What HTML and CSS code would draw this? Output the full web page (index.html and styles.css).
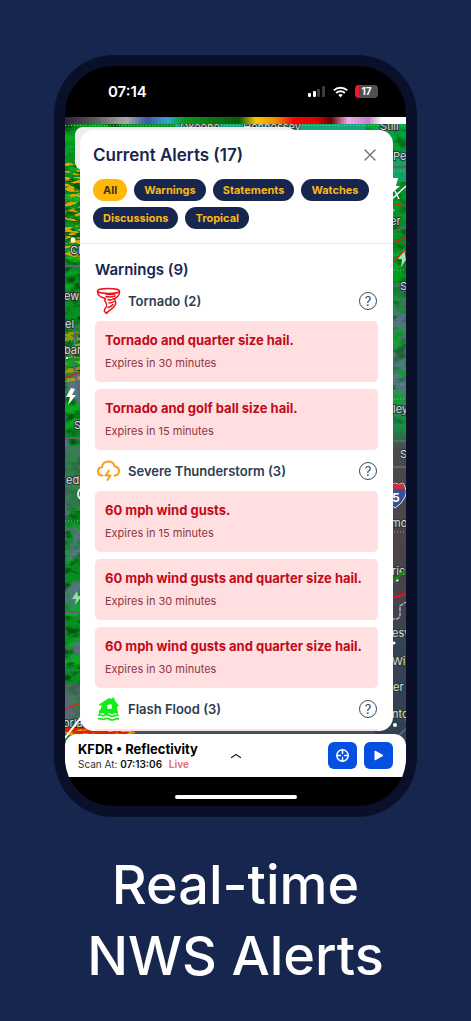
FILE: index.html
```html
<!DOCTYPE html>
<html lang="en">
<head>
    <meta charset="UTF-8">
    <meta name="viewport" content="width=device-width, initial-scale=1.0">
    <title>Real-time NWS Alerts</title>
    <link rel="stylesheet" href="styles.css">
</head>
<body>
    <section class="phone">
        <div class="screen">
            <div class="status-bar">
                <span class="clock">07:14</span>
                <div class="status-icons">
                    <svg width="18" height="12" viewBox="0 0 18 12" fill="#fff">
                        <rect x="0" y="7" width="3" height="4" rx="1"/>
                        <rect x="5" y="5" width="3" height="6" rx="1"/>
                        <rect x="9" y="3" width="3" height="8" rx="1" fill="#3d3d3d"/>
                        <rect x="14" y="0" width="3" height="11" rx="1" fill="#3d3d3d"/>
                    </svg>
                    <svg width="15" height="12" viewBox="0 0 15 12" fill="none" stroke="#fff" stroke-width="2">
                        <path d="M.8 4.4a9.6 9.6 0 0 1 13.4 0"/>
                        <path d="M3.2 7a6.2 6.2 0 0 1 8.6 0"/>
                        <path d="M7.500 11.200 5.300 9a3.200 3.200 0 0 1 4.400 0z" fill="#fff" stroke="none"/>
                    </svg>
                    <span class="battery">17</span>
                </div>
            </div>
            <div class="color-scale"></div>

            <main class="viewport">
                <svg class="map" viewBox="0 0 341 653" preserveAspectRatio="none" aria-hidden="true">
                    <defs>
                        <filter id="dark" x="0" y="0" width="100%" height="100%" color-interpolation-filters="sRGB">
                            <feTurbulence type="fractalNoise" baseFrequency="0.07 0.12" numOctaves="3" seed="4"/>
                            <feColorMatrix values="0 0 0 0 0  0 0 0 0 .32  0 0 0 0 .04  4 0 0 0 -1.8"/>
                        </filter>
                        <filter id="lime" x="0" y="0" width="100%" height="100%" color-interpolation-filters="sRGB">
                            <feTurbulence type="fractalNoise" baseFrequency="0.05 0.09" numOctaves="4" seed="9"/>
                            <feColorMatrix values="0 0 0 0 .02  0 0 0 0 .68  0 0 0 0 .12  6 0 0 0 -3"/>
                        </filter>
                        <filter id="blue" x="0" y="0" width="100%" height="100%" color-interpolation-filters="sRGB">
                            <feTurbulence type="fractalNoise" baseFrequency="0.04 0.03" numOctaves="4" seed="21"/>
                            <feColorMatrix values="0 0 0 0 .33  0 0 0 0 .46  0 0 0 0 .5  7 0 0 0 -3.500"/>
                        </filter>
                        <filter id="gold" x="0" y="0" width="100%" height="100%" color-interpolation-filters="sRGB">
                            <feTurbulence type="fractalNoise" baseFrequency="0.08 0.3" numOctaves="3" seed="7"/>
                            <feColorMatrix values="0 0 0 0 .85  0 0 0 0 .66  0 0 0 0 0  10 0 0 0 -5"/>
                        </filter>
                        <linearGradient id="east" x1="0" y1="0" x2="0" y2="1">
                            <stop offset="0" stop-color="#00a83c"/>
                            <stop offset=".24" stop-color="#087f22"/>
                            <stop offset=".3" stop-color="#547485"/>
                            <stop offset=".4" stop-color="#4f7a7c"/>
                            <stop offset=".46" stop-color="#168f49"/>
                            <stop offset=".5" stop-color="#4d484b"/>
                            <stop offset=".72" stop-color="#4b4149"/>
                            <stop offset=".8" stop-color="#344454"/>
                            <stop offset="1" stop-color="#2f3f54"/>
                        </linearGradient>
                    </defs>
                    <rect width="341" height="653" fill="#078e20"/>
                    <rect width="60" height="653" filter="url(#dark)"/>
                    <rect width="60" height="653" filter="url(#lime)"/>
                    <rect y="235" width="60" height="418" filter="url(#blue)"/>
                    <rect y="35" width="40" height="100" filter="url(#gold)"/>
                    <rect y="208" width="40" height="50" filter="url(#gold)" opacity=".7"/>
                    <path d="M0 322h30v70l-30-10z" fill="#565f70" opacity=".5"/>
                    <path d="M0 560h20l12 30v20H0z" fill="#5d6470" opacity=".7"/>
                    <rect x="110" width="231" height="14" fill="#17a778"/>
                    <rect x="300" width="41" height="653" fill="url(#east)"/>
                    <rect x="300" y="4" width="41" height="296" filter="url(#dark)" opacity=".6"/>
                    <rect x="300" y="30" width="41" height="290" filter="url(#lime)" opacity=".7"/>
                    <rect x="310" y="28" width="31" height="30" fill="#16a66e" opacity=".8"/>
                    <rect y="603" width="70" height="8" fill="#d92500"/>
                    <rect y="605" width="70" height="6" filter="url(#gold)"/>
                    <rect x="70" y="604" width="240" height="8" fill="#43505f"/>

                    <g class="roads">
                        <path d="M0 142h18M0 203h16M10 203l-2 35 12 60M10 218q2-10 10-12M0 314h18M0 403l18 10M0 488h18M0 524h18"/>
                        <path d="M324 43h17M326 108l15-5M326 162h15M326 317h15M326 595q12-10 15 2M330 615l11-10M326 343h15"/>
                    </g>
                    <g class="county">
                        <path d="M0 1.500h341M0 74h18M0 217h18M0 397h18M326 47h15M326 131h15M326 146h15M326 260h15M326 275h15M326 408h15"/>
                    </g>
                    <g class="labels">
                        <text x="115" y="7">Okeene</text>
                        <text x="178" y="7">Hennessey</text>
                        <text x="315" y="6">Still</text>
                        <text x="328" y="36">Pe</text>
                        <text x="325" y="101">er</text>
                        <text x="5" y="130">Cl</text>
                        <text x="-1" y="176">ew</text>
                        <text x="0" y="204">el</text>
                        <text x="-1" y="230">bar</text>
                        <text x="9" y="305">S</text>
                        <text x="1" y="360">ed</text>
                        <text x="-2" y="603">orla</text>
                        <text x="335" y="166">S</text>
                        <text x="328" y="289">ley</text>
                        <text x="335" y="334">S</text>
                        <text x="326" y="403">mo</text>
                        <text x="327" y="451">rie</text>
                        <text x="327" y="513">esv</text>
                        <text x="327" y="541">Wie</text>
                        <text x="328" y="567">er</text>
                        <text x="327" y="594">nto</text>
                    </g>
                    <g fill="#fff">
                        <circle cx="8" cy="116" r="2.500"/>
                        <circle cx="2" cy="234" r="1"/>
                        <circle cx="332" cy="456" r="1.500"/>
                        <circle cx="329" cy="519" r="1.500"/>
                        <circle cx="330" cy="601" r="2"/>
                        <path d="M6 264 1 273h4l-2 8 8-10H7l3-6z"/>
                        <path d="M12 467 7 475h4l-1 6 7-9h-4z" fill="#8fe0a0"/>
                        <path d="M326 54h7l-2 8h4l-9 8z"/>
                        <path d="m339 125-6 10h4l-1 8 5-7z" fill="#9fe8ac"/>
                        <path d="M325 85h5l-4 7z" opacity=".6"/>
                    </g>
                    <circle cx="19" cy="370" r="6" fill="none" stroke="#dff5e6" stroke-width="2"/>
                    <path d="M326 76 341 62M330 67l4 8" stroke="#fff" stroke-width="1.500" fill="none"/>
                    <path d="M326 79l15 3M326 119l15-5M326 140l15-15M0 254l18-7M0 585l18-7" stroke="#d4261c" stroke-width="1.500" fill="none"/>
                    <path d="M326 474l15-4" stroke="#f10d20" stroke-width="2"/>
                    <path d="M326 459l15-13" stroke="#12851d" stroke-width="3"/>
                    <path d="M0 614 17 592" stroke="#fff" stroke-width="2"/>
                    <path d="M326 495h5q4 0 4-5v-8l6-4" stroke="#a7b0bd" stroke-width="1.500" stroke-dasharray="4 1" fill="none"/>
                    <path d="M323 360q4 2 7-1 4 3 8 0 5 8 2 14-3 7-10 11-7-4-9-11-2-6 2-13z" fill="#3d4f96" stroke="#e5e4ed"/>
                    <path d="M323 360q4 2 7-1 4 3 8 0l2 6h-19z" fill="#cf3038"/>
                    <text class="shield" x="327" y="378">5</text>
                </svg>

                <div class="map-card"></div>

                <div class="alerts" role="dialog" aria-labelledby="alerts-title">
                    <header class="alerts-header">
                        <div class="title-row">
                            <h1 id="alerts-title">Current Alerts (17)</h1>
                            <button class="icon-btn close" aria-label="Close">
                                <svg width="12" height="12" viewBox="0 0 12 12" stroke="#667080" stroke-width="1.400" stroke-linecap="round"><path d="m1 1 10 10M11 1 1 11"/></svg>
                            </button>
                        </div>
                        <div class="filters">
                            <button class="chip active">All</button>
                            <button class="chip">Warnings</button>
                            <button class="chip">Statements</button>
                            <button class="chip">Watches</button>
                            <button class="chip">Discussions</button>
                            <button class="chip">Tropical</button>
                        </div>
                    </header>

                    <div class="alerts-list">
                        <h2>Warnings (9)</h2>

                        <div class="group-title">
                            <svg width="26" height="28" viewBox="0 0 26 28" fill="none" stroke="#f01218" stroke-width="1.500" stroke-linecap="round" stroke-linejoin="round">
                                <ellipse cx="13.500" cy="4" rx="11" ry="2.500"/>
                                <path d="M2.500 4.500c0 3 2 5 5 6l3 1c-3 3 3 4 1 8-1 2-3 3-2 5l2 2c1-3 7-4 9-9 1-3-1-4-1-6 3-1 5-4 5-7"/>
                                <path d="M10 6.500c3 1.500 7 1 10 .5M11 9.500c3 1 6 .5 9-.5M13 12.500c2 .8 4 .5 6-.8M14 16c2 0 4-.5 5-1.500M13 20.500c2-.2 4-1.500 5-3"/>
                            </svg>
                            <h3>Tornado (2)</h3>
                            <button class="icon-btn help" aria-label="About tornado warnings">?</button>
                        </div>
                        <article class="alert">
                            <h4>Tornado and quarter size hail.</h4>
                            <p>Expires in 30 minutes</p>
                        </article>
                        <article class="alert">
                            <h4>Tornado and golf ball size hail.</h4>
                            <p>Expires in 15 minutes</p>
                        </article>

                        <div class="group-title">
                            <svg width="26" height="28" viewBox="0 0 26 28" fill="none" stroke="#f59e1b" stroke-width="2" stroke-linecap="round" stroke-linejoin="round">
                                <path d="M7.500 18.500C4.500 18.500 3 16.600 3 14.500c0-2.400 1.700-4 4-4.200C7.300 6.500 10 4.500 13.500 4.500c3.200 0 5.500 2 6.200 5 2.800.3 4.300 2.200 4.300 4.500 0 2.500-1.700 4.500-4.500 4.500"/>
                                <path d="m14 13.500-3.500 5h5L12.500 23"/>
                            </svg>
                            <h3>Severe Thunderstorm (3)</h3>
                            <button class="icon-btn help" aria-label="About severe thunderstorm warnings">?</button>
                        </div>
                        <article class="alert">
                            <h4>60 mph wind gusts.</h4>
                            <p>Expires in 15 minutes</p>
                        </article>
                        <article class="alert">
                            <h4>60 mph wind gusts and quarter size hail.</h4>
                            <p>Expires in 30 minutes</p>
                        </article>
                        <article class="alert">
                            <h4>60 mph wind gusts and quarter size hail.</h4>
                            <p>Expires in 30 minutes</p>
                        </article>

                        <div class="group-title">
                            <svg width="26" height="28" viewBox="0 0 26 28" fill="#10ee18">
                                <path fill-rule="evenodd" d="M4 9.500 14 3l3 1 .5-1.500 2 .5v2L24 11l-2 .8 1 7.200-3-1-3 1.500-3-1.500-3 1.500-3-1.500-4 1v-3l2-2.500L6.500 10 4 10.800zM12 10l4.500-.8.7 4.300-4.500.8z"/>
                                <path d="M3 20.500c2-2 4 1 6 0s4-1 5.500 0 3.500 1 5.500 0 3-.5 4 0M3 24.200c2-2 4 1 6 0s4-1 5.500 0 3.500 1 5.500 0 3-.5 4 0" fill="none" stroke="#10ee18" stroke-width="1.700"/>
                            </svg>
                            <h3>Flash Flood (3)</h3>
                            <button class="icon-btn help" aria-label="About flash flood warnings">?</button>
                        </div>
                        <div class="next-alert"></div>
                    </div>
                </div>

                <div class="scan-bar">
                    <div class="scan-info">
                        <strong>KFDR • Reflectivity</strong>
                        <p>Scan At: <b>07:13:06</b> <span class="live">Live</span></p>
                    </div>
                    <button class="icon-btn expand" aria-label="Expand">
                        <svg width="12" height="6" viewBox="0 0 12 6" fill="none" stroke="#222" stroke-width="1.300" stroke-linecap="round" stroke-linejoin="round"><path d="M1.500 4.500 6 1.500l4.500 3"/></svg>
                    </button>
                    <div class="scan-actions">
                        <button class="action" aria-label="Locate">
                            <svg width="15" height="15" viewBox="0 0 15 15" fill="none" stroke="#fff" stroke-width="1.500" stroke-linecap="round"><circle cx="7.500" cy="7.500" r="5.700"/><path d="M7.500 1.500v4M7.500 9.500v4M1.500 7.500h4M9.500 7.500h4"/></svg>
                        </button>
                        <button class="action" aria-label="Play">
                            <svg width="13" height="13" viewBox="0 0 13 13" fill="#fff" stroke="#fff" stroke-linejoin="round"><path d="M3 2v9l8-4.500z"/></svg>
                        </button>
                    </div>
                </div>
            </main>

            <div class="home-area"><span class="home-indicator"></span></div>
        </div>
    </section>

    <p class="caption">Real-time<br>NWS Alerts</p>
</body>
</html>
```
FILE: styles.css
```css
* {
    box-sizing: border-box;
}

body {
    margin: 0;
    padding: 55px 54px 0;
    background-color: #17264f;
    font-family: Inter, "Liberation Sans", sans-serif;
}

h1, h2, h3, h4, p {
    margin: 0;
}

button {
    font-family: inherit;
    border: none;
    padding: 0;
    cursor: pointer;
}

svg {
    display: block;
}

.phone {
    padding: 11px;
    border-radius: 60px;
    background-color: #0a102a;
}

.screen {
    overflow: hidden;
    border-radius: 48px;
    background-color: #000;
}

/* status bar */
.status-bar {
    display: flex;
    justify-content: space-between;
    align-items: center;
    height: 51px;
    padding: 0 28px 0 43px;
    color: #fff;
}

.clock {
    font-size: 15px;
    font-weight: 600;
}

.status-icons {
    display: flex;
    align-items: center;
    gap: 7px;
}

.battery {
    width: 23px;
    border-radius: 4px;
    background: linear-gradient(90deg, #f5142d 4px, #505050 4px);
    font-size: 10px;
    line-height: 13px;
    font-weight: 700;
    text-align: center;
}

.color-scale {
    height: 7px;
    background: linear-gradient(90deg, #3a1847, #555 8%, #aaa 18%, #3d58a8 24%, #35a5cf 30%, #0a9a1c 35%, #075c08 51%, #f7c800 56%, #f08800 62%, #f00 67%, #d00 74%, #6a0000 78%, #f7a8ea 83%, #c580cc 89%, #fff 93%);
}

/* map and everything on top of it */
.viewport {
    position: relative;
    padding-top: 6px;
}

.map {
    position: absolute;
    top: 0;
    left: 0;
    width: 100%;
    height: 100%;
}

.roads path {
    fill: none;
    stroke: #5c6672;
    stroke-width: 2;
}

.county path {
    fill: none;
    stroke: #b9c9c0;
    stroke-width: 1;
    stroke-dasharray: 1 2;
    opacity: .7;
}

.labels text {
    fill: #d6ddda;
    stroke: #2c3b38;
    stroke-width: 2px;
    paint-order: stroke;
    font-size: 11px;
}

.shield {
    fill: #fff;
    font-size: 12px;
    font-weight: 700;
}

.map-card {
    position: absolute;
    top: 3px;
    left: 10px;
    width: 220px;
    height: 43px;
    border-radius: 8px;
    background-color: #eee;
}

/* alerts dialog */
.alerts {
    position: relative;
    margin: 0 13px 3px 15px;
    overflow: hidden;
    border-radius: 14px;
    background-color: #fff;
}

.alerts-header {
    padding: 13px 13px 14px;
    border-bottom: 1px solid #e6e6ea;
}

.title-row {
    display: flex;
    justify-content: space-between;
    align-items: center;
    height: 24px;
    margin-bottom: 12px;
}

.title-row h1 {
    font-size: 17px;
    font-weight: 600;
    color: #17264f;
}

.icon-btn {
    display: flex;
    justify-content: center;
    align-items: center;
    background: none;
}

.close {
    width: 20px;
    height: 20px;
}

.filters {
    display: flex;
    flex-wrap: wrap;
    gap: 6px 7px;
}

.chip {
    height: 22px;
    padding: 0 10px;
    border-radius: 11px;
    background-color: #17264f;
    color: #fdb813;
    font-size: 11px;
    font-weight: 700;
}

.chip.active {
    background-color: #ffb70a;
    color: #3b3218;
}

.alerts-list {
    padding: 16px 15px 0;
}

.alerts-list h2 {
    font-size: 15px;
    line-height: 20px;
    font-weight: 600;
    color: #17264f;
}

.group-title {
    display: flex;
    align-items: center;
    gap: 7px;
    height: 41px;
}

.group-title h3 {
    flex: 1;
    font-size: 13px;
    font-weight: 600;
    color: #2d3c50;
}

.help {
    width: 18px;
    height: 18px;
    margin-right: 1px;
    border: 1px solid #3b4858;
    border-radius: 50%;
    color: #3b4858;
    font-size: 13px;
    line-height: 16px;
}

.alert {
    padding: 9px 10px;
    border-radius: 5px;
    background-color: #ffdfe0;
}

.alert + .alert {
    margin-top: 7px;
}

.alert h4 {
    margin-bottom: 4px;
    font-size: 13px;
    line-height: 20px;
    font-weight: 700;
    color: #c20a18;
}

.alert p {
    font-size: 11px;
    line-height: 19px;
    color: #8f3440;
}

.next-alert {
    height: 2px;
    background-color: #ffdfe0;
}

/* radar scan bar */
.scan-bar {
    position: relative;
    display: grid;
    grid-template-columns: 1fr auto 1fr;
    align-items: center;
    height: 43px;
    padding: 0 13px;
    border-radius: 12px 12px 0 0;
    background-color: #fff;
}

.scan-info {
    white-space: nowrap;
}

.scan-info strong {
    display: block;
    font-size: 13px;
    line-height: 16px;
    font-weight: 700;
}

.scan-info p {
    font-size: 10px;
    line-height: 14px;
    color: #333;
}

.scan-info b {
    font-weight: 600;
    color: #111;
}

.live {
    margin-left: 4px;
    font-weight: 700;
    color: #dc7580;
}

.expand {
    width: 24px;
    height: 24px;
}

.scan-actions {
    display: flex;
    justify-content: flex-end;
    gap: 7px;
}

.action {
    display: flex;
    justify-content: center;
    align-items: center;
    width: 29px;
    height: 27px;
    border-radius: 6px;
    background-color: #0550e0;
}

.home-area {
    display: flex;
    justify-content: center;
    height: 29px;
    padding-top: 18px;
}

.home-indicator {
    width: 122px;
    height: 4px;
    border-radius: 2px;
    background-color: #fff;
}

.caption {
    margin-top: 32px;
    color: #fff;
    font-size: 54px;
    line-height: 71px;
    font-weight: 500;
    text-align: center;
    white-space: nowrap;
}
```
